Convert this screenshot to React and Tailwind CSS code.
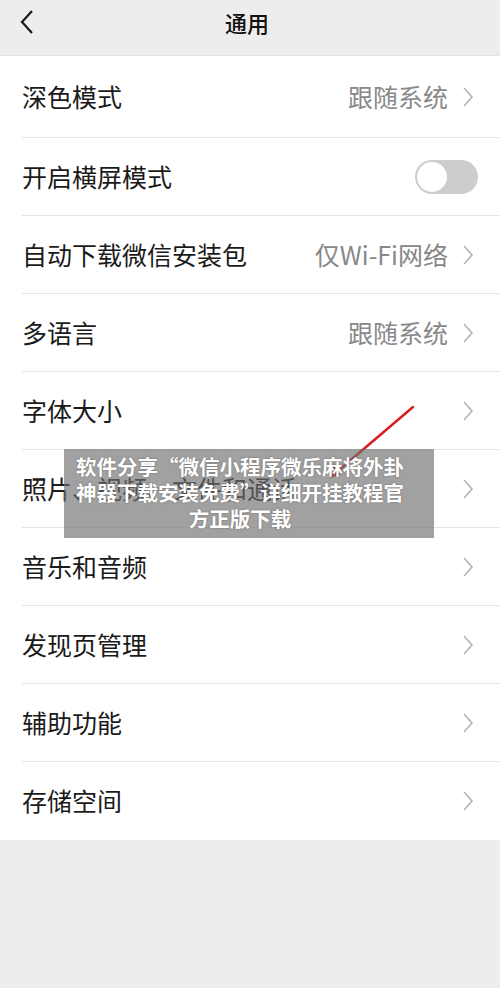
import React from "react";

const rows = [
  { label: "深色模式", value: "跟随系统" },
  { label: "开启横屏模式", toggle: true },
  { label: "自动下载微信安装包", value: "仅Wi-Fi网络" },
  { label: "多语言", value: "跟随系统" },
  { label: "字体大小" },
  { label: "照片、视频、文件和通话" },
  { label: "音乐和音频" },
  { label: "发现页管理" },
  { label: "辅助功能" },
  { label: "存储空间" },
];

const Chevron = () => (
  <svg width="12" height="22" viewBox="0 0 12 22" className="ml-[14px] mr-[2px]">
    <path d="M2 2 L10 11 L2 20" fill="none" stroke="#b3b3b3" strokeWidth="1.6" />
  </svg>
);

const Toggle = () => (
  <div className="w-[63px] h-[34px] rounded-full bg-[#cdcdcd] flex items-center pl-[2px] -mr-[2px]">
    <div className="w-[30px] h-[30px] rounded-full bg-white" />
  </div>
);

const Row = ({ item, index }) => {
  const h = index === 0 ? "h-[81px]" : index === rows.length - 1 ? "h-[79px]" : "h-[78px]";
  return (
    <div className={`${h} flex flex-col`}>
      {index > 0 && <div className="h-px bg-[#e5e5e5] ml-[22px] shrink-0" />}
      <div className="flex-1 flex items-center pl-[22px] pr-[24px]">
        <span className="flex-1 text-[25px] text-[#1a1a1a]">{item.label}</span>
        {item.value && <span className="text-[25px] text-[#888888]">{item.value}</span>}
        {item.toggle ? <Toggle /> : <Chevron />}
      </div>
    </div>
  );
};

export default function App() {
  return (
    <div
      className="relative w-[500px] h-[988px] bg-[#ededed] overflow-hidden"
      style={{ fontFamily: '"Noto Sans CJK SC", "Noto Sans", sans-serif' }}
    >
      {/* Header */}
      <div className="h-[56px] flex items-start relative border-b border-[#e2e2e2]">
        <svg width="16" height="26" viewBox="0 0 16 26" className="absolute left-[19px] top-[9px]">
          <path d="M13 2 L3 13 L13 24" fill="none" stroke="#1a1a1a" strokeWidth="2.2" />
        </svg>
        <div className="flex-1 text-center text-[22px] leading-[30px] pt-[7px] font-medium text-[#111] pr-[6px]">通用</div>
      </div>

      {/* List */}
      <div className="bg-white">
        {rows.map((item, i) => (
          <Row key={item.label} item={item} index={i} />
        ))}
      </div>

      {/* Red arrow annotation */}
      <svg className="absolute left-0 top-0 pointer-events-none" width="500" height="988">
        <line x1="413" y1="407" x2="332" y2="476" stroke="#d81e1e" strokeWidth="2.5" strokeLinecap="round" />
        <path d="M330 478 L334 466 L342 474 Z" fill="#d81e1e" />
      </svg>

      {/* Overlay caption */}
      <div className="absolute left-[64px] top-[449px] w-[370px] h-[89px] bg-[rgba(110,110,110,0.65)] pl-[10px] pr-[28px] pt-[4px]">
        <p
          className="text-white font-bold text-[20.5px] leading-[26px] text-center"
          style={{ textShadow: "0 0 2px rgba(0,0,0,0.35)" }}
        >
          软件分享“微信小程序微乐麻将外卦
          <br />
          神器下载安装免费”详细开挂教程官
          <br />
          方正版下载
        </p>
      </div>
    </div>
  );
}
